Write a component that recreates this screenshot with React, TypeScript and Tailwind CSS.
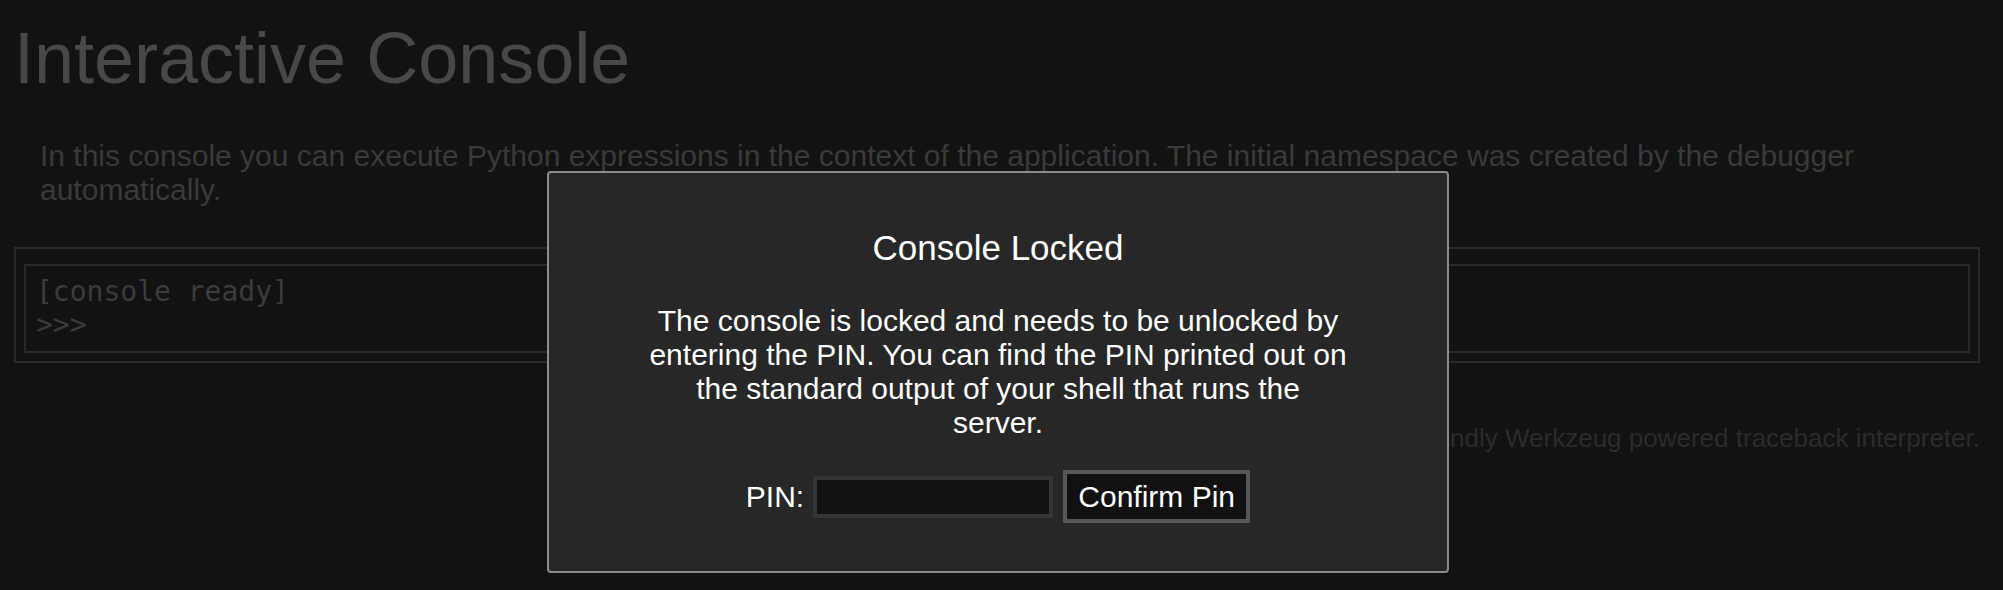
export default function App() {
  return (
    <div
      className="relative h-[590px] w-full overflow-hidden bg-[#121212] text-left"
      style={{ fontFamily: '"Liberation Sans", Arial, sans-serif' }}
    >
      {/* page under the lock overlay, already dimmed */}
      <div className="pl-[14px] pr-[23px] pt-[17px]">
        <h1 className="text-[72px] leading-[83px] font-normal text-[#484848]">
          Interactive Console
        </h1>
        <div className="mx-[26px] mt-[39px] text-[30px] leading-[33.5px] text-[#3a3a3a]">
          In this console you can execute Python expressions in the context of
          the application. The initial namespace was created by the debugger
          automatically.
        </div>
        <div className="mt-[41px] border-2 border-[#2a2a2a] px-2 pt-[15px] pb-[8px]">
          <div
            className="border-2 border-[#2a2a2a] px-[10px] pt-[9px] pb-[10px] text-[28px] leading-[33px] text-[#3c3c3c]"
            style={{ fontFamily: '"DejaVu Sans Mono", monospace' }}
          >
            <div>[console ready]</div>
            <div>&gt;&gt;&gt;</div>
          </div>
        </div>
        <div className="mt-[60px] text-right text-[26px] leading-[30px] text-[#2c2c2c]">
          Brought to you by <strong className="font-bold">DON'T PANIC</strong>,
          your friendly Werkzeug powered traceback interpreter.
        </div>
      </div>

      {/* pin prompt */}
      <div className="absolute left-[547px] top-[171px] w-[902px] rounded-[4px] border-2 border-[#8c8c8c] bg-[#272727] px-[100px] pt-[55px] pb-[20px] text-center text-white">
        <h3 className="text-[35px] leading-[40px] font-normal">Console Locked</h3>
        <p className="mt-[36px] text-[30px] leading-[34px]">
          The console is locked and needs to be unlocked by entering the PIN.
          You can find the PIN printed out on the standard output of your shell
          that runs the server.
        </p>
        <form
          className="mt-[30px] mb-[28px] flex items-center justify-center text-[30px]"
          onSubmit={(e) => e.preventDefault()}
        >
          <span>PIN:</span>
          <input
            type="text"
            name="pin"
            className="ml-[9px] h-[42px] w-[240px] border-4 border-[#353535] bg-[#111] px-1 text-white outline-none"
          />
          <button
            type="submit"
            className="ml-[10px] h-[53px] w-[187px] border-4 border-[#575757] bg-[#111] text-[30px] leading-[34px] text-white"
          >
            Confirm Pin
          </button>
        </form>
      </div>
    </div>
  );
}
